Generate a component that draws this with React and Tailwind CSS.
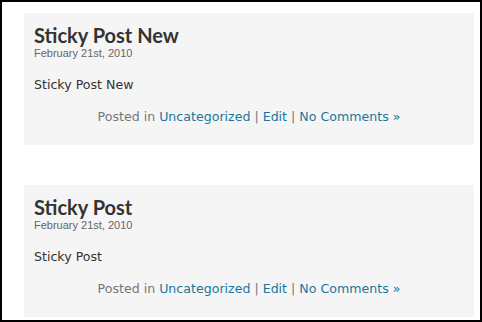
import React from "react";

const posts = [
  { title: "Sticky Post New", date: "February 21st, 2010", body: "Sticky Post New" },
  { title: "Sticky Post", date: "February 21st, 2010", body: "Sticky Post" }
];

function Post({ post }) {
  return (
    <article className="bg-[#f5f5f5] px-[10px] pt-[11px] h-[132px]">
      <h2 className="text-[20px] leading-[22px] font-bold text-[#333] font-['Lato',sans-serif]">
        {post.title}
      </h2>
      <div className="text-[11px] leading-[14px] text-[#666] font-['Liberation_Sans',Arial,sans-serif]">
        {post.date}
      </div>
      <p className="mt-[17px] text-[12.6px] leading-[16px] text-[#333] font-['DejaVu_Sans',sans-serif]">
        {post.body}
      </p>
      <div className="mt-[16px] text-center text-[12.6px] leading-[16px] text-[#777] font-['DejaVu_Sans',sans-serif]">
        Posted in <a className="text-[#21759b]">Uncategorized</a> | <a className="text-[#21759b]">Edit</a> |{" "}
        <a className="text-[#21759b]">No Comments »</a>
      </div>
    </article>
  );
}

export default function App() {
  return (
    <div className="w-[482px] h-[322px] bg-white border-2 border-black pl-[22px] pr-[6px] pt-[11px] flex flex-col gap-[40px] overflow-hidden">
      {posts.map((post) => (
        <Post key={post.title} post={post} />
      ))}
    </div>
  );
}
